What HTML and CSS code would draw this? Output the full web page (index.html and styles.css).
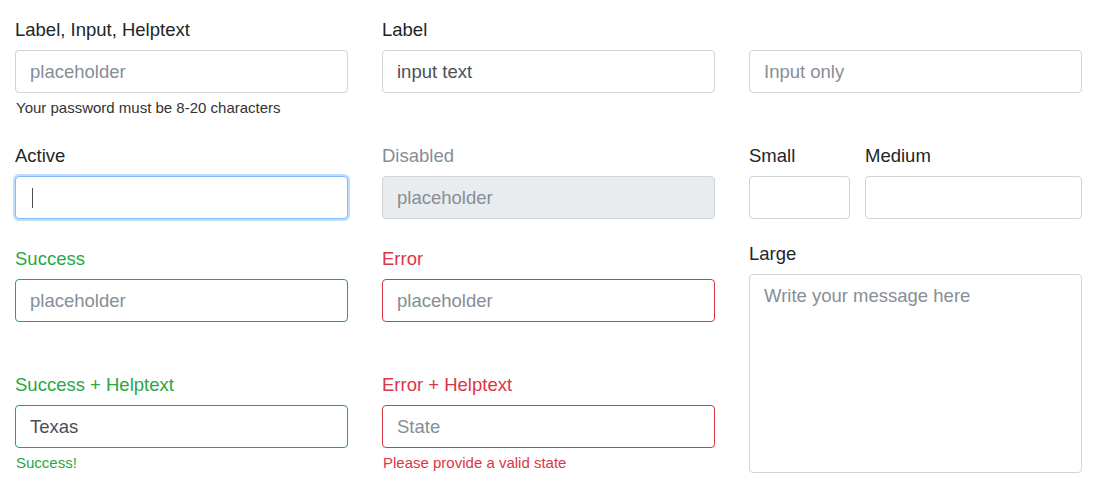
FILE: index.html
```html
<!DOCTYPE html>
<html lang="en">
<head>
<meta charset="utf-8">
<title>Form inputs</title>
<link rel="stylesheet" href="styles.css">
</head>
<body>
<div class="form-grid">
  <div class="field">
    <label class="label">Label, Input, Helptext</label>
    <input class="control" type="text" placeholder="placeholder">
    <div class="help">Your password must be 8-20 characters</div>
  </div>
  <div class="field">
    <label class="label">Label</label>
    <input class="control" type="text" value="input text">
  </div>
  <div class="field no-label">
    <input class="control" type="text" placeholder="Input only">
  </div>

  <div class="field">
    <label class="label">Active</label>
    <div class="control active"><span class="caret"></span></div>
  </div>
  <div class="field">
    <label class="label disabled">Disabled</label>
    <input class="control" type="text" placeholder="placeholder" disabled>
  </div>
  <div class="field-pair">
    <div class="field small">
      <label class="label">Small</label>
      <input class="control" type="text">
    </div>
    <div class="field medium">
      <label class="label">Medium</label>
      <input class="control" type="text">
    </div>
  </div>

  <div class="field success">
    <label class="label">Success</label>
    <input class="control" type="text" placeholder="placeholder">
  </div>
  <div class="field error">
    <label class="label">Error</label>
    <input class="control" type="text" placeholder="placeholder">
  </div>
  <div class="field large">
    <label class="label">Large</label>
    <textarea class="control textarea" placeholder="Write your message here"></textarea>
  </div>

  <div class="field success">
    <label class="label">Success + Helptext</label>
    <input class="control" type="text" value="Texas">
    <div class="help">Success!</div>
  </div>
  <div class="field error">
    <label class="label">Error + Helptext</label>
    <input class="control" type="text" placeholder="State">
    <div class="help">Please provide a valid state</div>
  </div>
</div>
</body>
</html>
```
FILE: styles.css
```css
* { box-sizing: border-box; }

body {
  margin: 0;
  background: #ffffff;
  font-family: "Liberation Sans", Arial, sans-serif;
  color: #212529;
}

.form-grid {
  display: grid;
  grid-template-columns: repeat(3, 333px);
  grid-template-rows: 96px 73px 96px 100px;
  column-gap: 34px;
  row-gap: 30px;
  padding: 19px 0 20px 15px;
}

.field {
  display: flex;
  flex-direction: column;
  min-width: 0;
}

.no-label { padding-top: 31px; }

.label {
  display: block;
  font-size: 18.5px;
  line-height: 20px;
  padding-top: 1px;
  margin-bottom: 10px;
  color: #212529;
}

.label.disabled { color: #868e96; }

.control {
  display: block;
  width: 100%;
  height: 43px;
  flex: none;
  margin: 0;
  padding: 0 14px;
  border: 1px solid #ced4da;
  border-radius: 4px;
  background: #ffffff;
  font-family: "Liberation Sans", Arial, sans-serif;
  font-size: 18.5px;
  color: #495057;
  outline: none;
}

.control::placeholder { color: #868e96; opacity: 1; }

.control:disabled { background: #e9ecef; }

.control.active {
  display: flex;
  align-items: center;
  border-color: #80bdff;
  box-shadow: 0 0 0 2px rgba(0, 123, 255, 0.25);
  padding-left: 16px;
}

.caret {
  display: block;
  width: 1px;
  height: 20px;
  background: #495057;
}

.help {
  margin-top: 6px;
  font-size: 15px;
  line-height: 18px;
  color: #333333;
  padding-left: 1px;
}

.field-pair {
  display: flex;
  gap: 15px;
}

.field.small { width: 101px; flex: none; }
.field.medium { flex: 1; }

.success .label, .success .help { color: #28a745; }
.success .control { border-color: #28a745; }

.error .label, .error .help { color: #dc3545; }
.error .control { border-color: #dc3545; }

.field.large {
  grid-column: 3;
  grid-row: 3 / 5;
  align-self: start;
  margin-top: -5px;
}

.textarea {
  height: 199px;
  padding: 11px 14px;
  line-height: 20px;
  resize: none;
}
```
